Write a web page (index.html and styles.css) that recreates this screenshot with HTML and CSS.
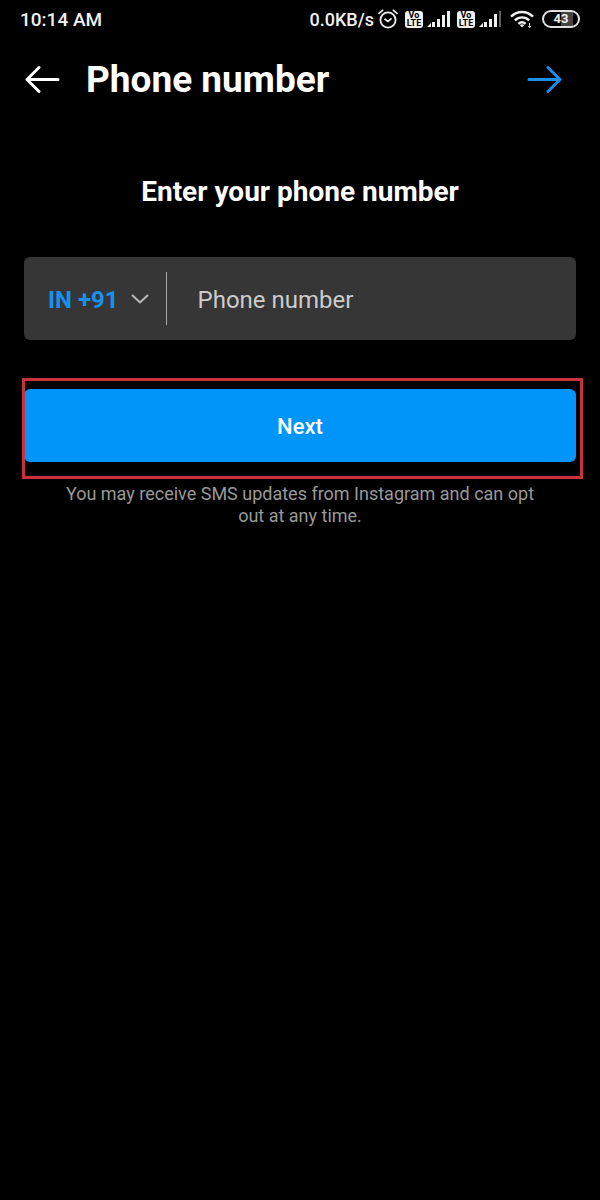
FILE: index.html
```html
<!DOCTYPE html>
<html lang="en">
<head>
<meta charset="utf-8">
<meta name="viewport" content="width=device-width, initial-scale=1">
<title>Phone number</title>
<link rel="stylesheet" href="styles.css">
</head>
<body>
<div class="status-bar">
  <span class="clock">10:14 AM</span>
  <div class="indicators">
    <span class="speed">0.0KB/s</span>
    <svg class="alarm" width="20" height="20" viewBox="0 0 20 20" fill="none" stroke="currentColor" stroke-width="1.8" stroke-linecap="round" aria-hidden="true">
      <circle cx="10" cy="11" r="7.6"/>
      <path d="M1 4.4L4.6 1.4M19 4.4L15.4 1.4M7 10.2L10 12.4L13 9.8" stroke-width="1.7"/>
    </svg>
    <span class="volte"><span>Vo</span><span>LTE</span></span>
    <svg class="signal" width="23" height="18" viewBox="0 0 23 18" fill="currentColor" aria-hidden="true">
      <path d="M0 17L4 13V17ZM5 12H8V17H5ZM10 9H13V17H10ZM15 5H18V17H15ZM20 1H23V17H20Z"/>
    </svg>
    <span class="volte"><span>Vo</span><span>LTE</span></span>
    <svg class="signal" width="23" height="18" viewBox="0 0 23 18" fill="currentColor" aria-hidden="true">
      <path d="M0 17L4 13V17ZM5 12H8V17H5ZM10 9H13V17H10ZM15 4H18V17H15Z"/>
      <path d="M20 1H22V17H20Z" opacity=".4"/>
    </svg>
    <svg class="wifi" width="24" height="18" viewBox="0 0 24 18" fill="none" stroke="currentColor" stroke-width="2.4" aria-hidden="true">
      <path d="M1 6.6C7.4.4 16.6.4 23 6.6M4.8 10.4C9 6.4 15 6.4 19.2 10.4M8.4 13.8C10.6 11.8 13.4 11.8 15.6 13.8"/>
      <path d="M9.8 15L12 17.4L14.2 15Q12 13.6 9.8 15Z" fill="currentColor" stroke="none"/>
      <path d="M19.6 13V17.6M18.4 16L19.6 17.6L20.8 16" stroke-width="1"/>
    </svg>
    <span class="battery">43</span>
  </div>
</div>
<header class="app-bar">
  <button class="icon-button" type="button" aria-label="Back">
    <svg width="36" height="28" viewBox="0 0 36 28" fill="none" stroke="currentColor" stroke-width="3" stroke-linecap="round" stroke-linejoin="round" aria-hidden="true">
      <path d="M34 14.5H3M15 2.5L3 14.5L15 26.5"/>
    </svg>
  </button>
  <h1 class="title">Phone number</h1>
  <button class="icon-button forward" type="button" aria-label="Continue">
    <svg width="36" height="28" viewBox="0 0 36 28" fill="none" stroke="currentColor" stroke-width="3" stroke-linecap="round" stroke-linejoin="round" aria-hidden="true">
      <path d="M2 14.5H33M21 2.5L33 14.5L21 26.5"/>
    </svg>
  </button>
</header>
<main>
  <form class="phone-form">
    <h2 class="prompt"><label for="phone">Enter your phone number</label></h2>
    <div class="field">
      <button class="country" type="button" aria-label="Country code IN +91">
        <span>IN +91</span>
        <svg width="18" height="12" viewBox="0 0 18 12" fill="none" stroke="currentColor" stroke-width="2" aria-hidden="true"><path d="M1 1L9 8.5L17 1"/></svg>
      </button>
      <input class="phone" id="phone" type="tel" placeholder="Phone number">
    </div>
    <div class="action">
      <button class="next" type="button">Next</button>
    </div>
    <p class="note">You may receive SMS updates from Instagram and can opt out at any time.</p>
  </form>
</main>
</body>
</html>
```
FILE: styles.css
```css
* {
  box-sizing: border-box;
}

body {
  margin: 0;
  min-height: 100vh;
  background: #000;
  color: #fff;
  font-family: Roboto, "Liberation Sans", sans-serif;
}

button,
input {
  margin: 0;
  border: 0;
  padding: 0;
  background: none;
  color: inherit;
  font: inherit;
}

svg {
  display: block;
  flex: none;
}

.status-bar {
  display: flex;
  align-items: center;
  justify-content: space-between;
  height: 38px;
  padding: 0 20px;
  color: #f0f0f0;
  font-size: 18px;
  font-weight: 500;
}

.clock {
  font-size: 19px;
}

.indicators {
  display: flex;
  align-items: center;
  gap: 4px;
}

.volte {
  display: flex;
  flex-direction: column;
  align-items: center;
  justify-content: center;
  width: 18px;
  height: 17px;
  margin-left: 3px;
  border-radius: 3px;
  background: #f0f0f0;
  color: #000;
  font-size: 9px;
  font-weight: 700;
  line-height: 8px;
}

.wifi {
  margin-left: 4px;
}

.battery {
  width: 38px;
  height: 18px;
  margin-left: 4px;
  border: 2px solid #e0e0e0;
  border-radius: 9px;
  background: linear-gradient(90deg, #000 0 50%, #444 50% 85%, #000 85%);
  font-size: 13px;
  font-weight: 700;
  line-height: 14px;
  text-align: center;
}

.app-bar {
  display: flex;
  align-items: center;
  height: 82px;
  padding: 0 37px 0 24px;
}

.title {
  flex: 1;
  margin: 0 0 0 26px;
  padding-top: 2px;
  font-size: 37px;
  font-weight: 700;
  line-height: 42px;
}

.forward {
  color: #1d8fe8;
}

.phone-form {
  padding: 56px 24px 24px;
}

.prompt {
  margin: 0 0 49px;
  font-size: 28px;
  font-weight: 700;
  line-height: 32px;
  text-align: center;
}

.field {
  display: flex;
  align-items: center;
  height: 83px;
  border-radius: 6px;
  background: #363636;
  font-size: 24px;
}

.country {
  display: flex;
  align-items: center;
  gap: 12px;
  height: 53px;
  padding: 2px 17px 0 24px;
  border-right: 1px solid #aaa;
  color: #1592ee;
  font-weight: 700;
}

.country svg {
  color: #bbb;
}

.phone {
  flex: 1;
  min-width: 0;
  height: 53px;
  padding: 2px 24px 0 31px;
}

.phone::placeholder {
  color: #ccc;
  opacity: 1;
}

.action {
  position: relative;
  margin-top: 49px;
}

.action::after {
  content: "";
  position: absolute;
  inset: -11px -7px -17px -2px;
  border: 3px solid #c8323c;
  pointer-events: none;
}

.next {
  display: block;
  width: 100%;
  height: 73px;
  padding-top: 2px;
  border-radius: 6px;
  background: #0295f9;
  font-size: 22px;
  font-weight: 500;
}

.note {
  max-width: 484px;
  margin: 21px auto 0;
  color: #999;
  font-size: 18px;
  line-height: 22px;
  text-align: center;
}
```
